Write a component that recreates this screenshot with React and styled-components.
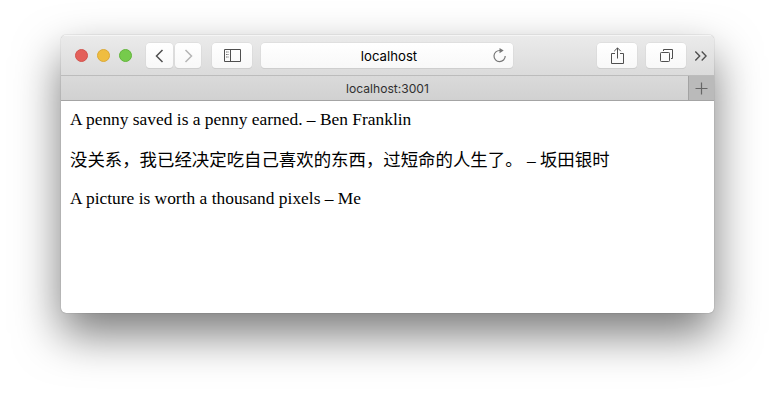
import React from "react";
import styled, { createGlobalStyle } from "styled-components";

const GlobalStyle = createGlobalStyle`
  * { box-sizing: border-box; }
  body { margin: 0; background: #fff; overflow: hidden; }
`;

const Desktop = styled.main`
  width: 775px;
  height: 400px;
  padding: 35px 61px 87px;
  overflow: hidden;
`;

const Window = styled.section`
  height: 278px;
  display: flex;
  flex-direction: column;
  border-radius: 5px;
  overflow: hidden;
  background: #fff;
  box-shadow: 0 0 1px rgba(0, 0, 0, 0.5), 0 21px 46px rgba(0, 0, 0, 0.53);
`;

const Toolbar = styled.header`
  flex: none;
  height: 41px;
  display: flex;
  align-items: flex-start;
  padding: 8px 7px 0 14px;
  background: linear-gradient(#ebebeb, #dbdbdb);
  border-bottom: 1px solid #bcbcbc;
  box-shadow: inset 0 1px #f5f5f5;
`;

const Lights = styled.div`
  display: flex;
  gap: 9px;
  margin: 6px 14px 0 0;
`;

const Light = styled.span`
  width: 13px;
  height: 13px;
  border-radius: 50%;
  background: ${(p) => p.$fill};
  border: 1px solid ${(p) => p.$edge};
`;

const Button = styled.button`
  flex: none;
  display: flex;
  align-items: center;
  justify-content: center;
  width: ${(p) => p.$width}px;
  height: 25px;
  margin: 0 ${(p) => p.$gap || 0}px 0 0;
  padding: 0;
  border: 0;
  border-radius: 4px;
  color: ${(p) => (p.$muted ? "#b5b5b5" : "#4f4f4f")};
  background: linear-gradient(#fff, #f8f8f8);
  box-shadow: 0 0 0 0.5px #d6d6d6, 0 1px 0 #c6c6c6;
`;

const Address = styled.div`
  flex: none;
  display: grid;
  grid-template-columns: 20px 1fr 20px;
  align-items: center;
  width: 252px;
  height: 25px;
  padding: 0 2px 0 6px;
  margin-right: auto;
  border-radius: 4px;
  color: #000;
  background: linear-gradient(#fff, #f8f8f8);
  box-shadow: 0 0 0 0.5px #d6d6d6, 0 1px 0 #c6c6c6;
  font: 13.2px/25px Inter, Roboto, sans-serif;
`;

const AddressText = styled.span`
  grid-column: 2;
  text-align: center;
  padding-top: 1px;
`;

const Overflow = styled.div`
  display: flex;
  width: 13px;
  height: 25px;
  align-items: center;
  color: #4f4f4f;
`;

const TabBar = styled.nav`
  flex: none;
  height: 25px;
  display: flex;
  background: linear-gradient(#dadada, #d1d1d1);
  border-bottom: 1px solid #a4a4a4;
`;

const Tab = styled.div`
  flex: 1;
  text-align: center;
  color: #303030;
  font: 12.1px/25px Inter, Roboto, sans-serif;
  padding-left: 26px;
`;

const NewTab = styled.div`
  width: 26px;
  display: flex;
  align-items: center;
  justify-content: center;
  background: #bababa;
  border-left: 1px solid #a3a3a3;
`;

const Page = styled.article`
  flex: 1;
  padding: 8px 9px 0;
  color: #000;
  font-family: "Liberation Serif", "Noto Sans CJK SC", serif;
  font-size: 17.42px;
`;

const Quote = styled.p`
  height: 20px;
  line-height: 20px;
  margin: 0 0 ${(p) => p.$after}px;
  white-space: nowrap;
`;

const Icon = ({ w, h, children, stroke = 1 }) => (
  <svg width={w} height={h} viewBox={`0 0 ${w} ${h}`} fill="none" stroke="currentColor" strokeWidth={stroke}>
    {children}
  </svg>
);

export default function App() {
  return (
    <Desktop>
      <GlobalStyle />
      <Window>
        <Toolbar>
          <Lights>
            <Light $fill="#e4605a" $edge="#d2534d" />
            <Light $fill="#efbd40" $edge="#dba936" />
            <Light $fill="#76cb4c" $edge="#62b53b" />
          </Lights>
          <Button $width={27} $gap={2} aria-label="Back">
            <Icon w={10} h={14} stroke={1.5}><path d="M7.5 1 1.5 7l6 6" /></Icon>
          </Button>
          <Button $width={26} $gap={11} $muted aria-label="Forward">
            <Icon w={10} h={14} stroke={1.5}><path d="m2.5 1 6 6-6 6" /></Icon>
          </Button>
          <Button $width={40} $gap={9} aria-label="Sidebar">
            <Icon w={17} h={13}>
              <path d="M.5.5h16v12H.5zM6.5.5v12" />
              <path d="M2 3h3M2 5.5h3M2 8h3" strokeWidth=".8" strokeDasharray="1 .4" />
            </Icon>
          </Button>
          <Address>
            <AddressText>localhost</AddressText>
            <Icon w={16} h={16} stroke={1.2}>
              <g transform="translate(2 0)" color="#777">
                <path d="M7 2.5A5.6 5.6 0 1 0 12.2 8" stroke="currentColor" />
                <path d="M6.5 0v5.2l4.2-2.6z" fill="currentColor" stroke="none" />
              </g>
            </Icon>
          </Address>
          <Button $width={40} $gap={9} aria-label="Share">
            <Icon w={14} h={17}>
              <path d="M5 6.5H1.5v10h12v-10H10M7.5 11.5V1M4.2 4.2 7.5.9l3.3 3.3" />
            </Icon>
          </Button>
          <Button $width={40} $gap={8} aria-label="Show tabs">
            <Icon w={14} h={13}>
              <rect x="1.5" y="3.5" width="9" height="9" rx=".8" />
              <path d="M4.5 2V.5h9v9H12" />
            </Icon>
          </Button>
          <Overflow>
            <Icon w={13} h={10} stroke={1.4}>
              <path d="m1.3.5 4.4 4.5-4.4 4.5M7.7.5l4.4 4.5-4.4 4.5" />
            </Icon>
          </Overflow>
        </Toolbar>
        <TabBar>
          <Tab>localhost:3001</Tab>
          <NewTab>
            <Icon w={13} h={13} stroke={1.2}><path d="M6.5.5v12M.5 6.5h12" stroke="#666" /></Icon>
          </NewTab>
        </TabBar>
        <Page>
          <Quote $after={21}>A penny saved is a penny earned. – Ben Franklin</Quote>
          <Quote $after={18} lang="zh-CN">没关系，我已经决定吃自己喜欢的东西，过短命的人生了。 – 坂田银时</Quote>
          <Quote>A picture is worth a thousand pixels – Me</Quote>
        </Page>
      </Window>
    </Desktop>
  );
}
